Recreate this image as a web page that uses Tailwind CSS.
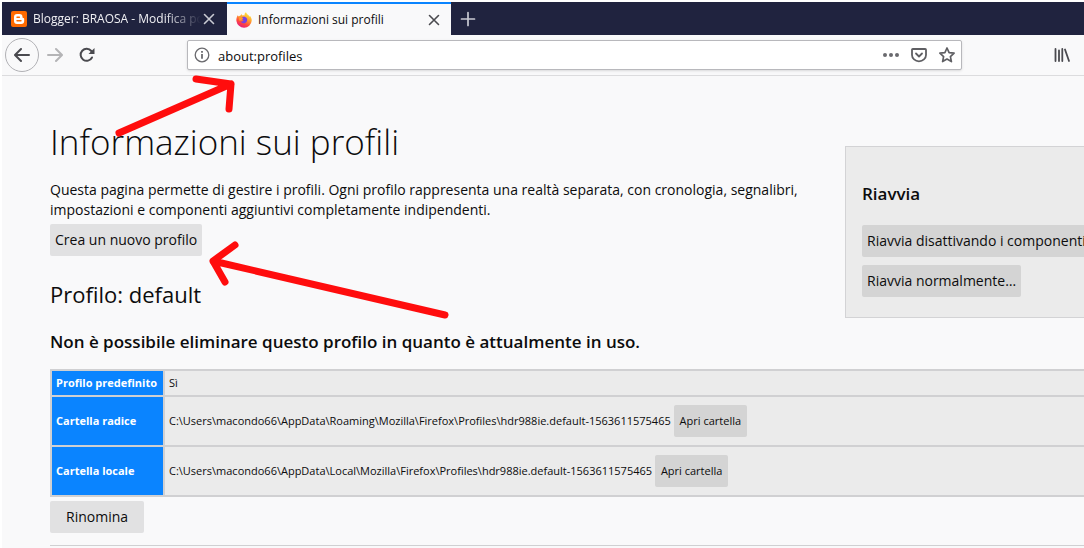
<!DOCTYPE html>
<html lang="it">
<head>
    <meta charset="UTF-8">
    <meta name="viewport" content="width=device-width, initial-scale=1.0">
    <title>Informazioni sui profili</title>
    <script src="https://cdn.jsdelivr.net/npm/@tailwindcss/browser@4"></script>
    <style>
        body {
            font-family: 'Open Sans', 'Noto Sans', sans-serif;
        }
    </style>
</head>
<body class="relative bg-white pt-[2px] pl-[2px] min-h-screen flex flex-col overflow-hidden text-sm text-[#0c0c0d]">

    <!-- Barra delle schede -->
    <nav class="flex h-[33px] bg-[#20233f] text-xs">
        <div class="flex items-center w-[225px] pl-[9px] pr-[10px] text-[#f0f0f4]">
            <svg class="w-4 h-4 shrink-0 mr-[6px]" viewBox="0 0 16 16">
                <rect width="16" height="16" rx="2" fill="#ff6a00"/>
                <path d="M6 3h2.5a3 3 0 0 1 3 3c0 .8.3 1 1 1 .4 0 .7.3.7.7V10a3 3 0 0 1-3 3H6a3 3 0 0 1-3-3V6a3 3 0 0 1 3-3z" fill="#fff"/>
                <path d="M6 6.2h2.4M6 9.8h4" stroke="#ff6a00" stroke-width="1.4" stroke-linecap="round"/>
            </svg>
            <span class="flex-1 overflow-hidden whitespace-nowrap [mask-image:linear-gradient(to_left,transparent,black_36px)]">Blogger: BRAOSA - Modifica post</span>
            <button aria-label="Chiudi scheda" class="shrink-0">
                <svg class="w-4 h-4" viewBox="0 0 16 16" fill="none" stroke="#c9cad3" stroke-width="1.6" stroke-linecap="round"><path d="M3.500 3.500l9 9M12.500 3.500l-9 9"/></svg>
            </button>
        </div>
        <div class="flex items-center w-[224px] pl-[9px] pr-[9px] bg-[#f9f9fa] border-t-2 border-[#0a84ff]">
            <svg class="w-4 h-4 shrink-0 mr-[6px]" viewBox="0 0 16 16">
                <defs>
                    <linearGradient id="fox" x1="0.8" y1="0" x2="0.3" y2="1">
                        <stop offset="0" stop-color="#fff044"/>
                        <stop offset="0.4" stop-color="#ffa42e"/>
                        <stop offset="0.7" stop-color="#ff4a3d"/>
                        <stop offset="1" stop-color="#e5177f"/>
                    </linearGradient>
                </defs>
                <path d="M1.800 3.200l.9 1.300c.5-.5 1-.8 1.700-1L5.800 2l.2 1.600C7 3 8 3.200 8.600 3.400 8.300 2 9 .9 10 .2c.4 1.600 2 2.300 3 3.600l.6 1 .5-.9c1.200 1.700 1.700 3.200 1.600 4.800A7.700 7.700 0 0 1 .4 9C.2 6.800.7 4.700 1.800 3.200z" fill="url(#fox)"/>
                <path d="M5.600 5.600c1.500-1.300 4.300-.9 5.300 1 .8 1.700 0 4-2 4.600-1.800.5-3.600-.4-4-2 1 .5 2.200.3 2.900-.5-1-.2-1.500-.6-1.500-1.200 0-.4.200-.6.700-.6z" fill="#7542e5"/>
                <path d="M3 5.500c1-.8 2-.6 2.800 0l1.600.6-1.600 1.300.2.900-2.700.5z" fill="#ff9a2c"/>
            </svg>
            <span class="flex-1 overflow-hidden whitespace-nowrap">Informazioni sui profili</span>
            <button aria-label="Chiudi scheda" class="shrink-0 ml-1">
                <svg class="w-4 h-4" viewBox="0 0 16 16" fill="none" stroke="#4a4a4f" stroke-width="1.6" stroke-linecap="round"><path d="M3.500 3.500l9 9M12.500 3.500l-9 9"/></svg>
            </button>
        </div>
        <button aria-label="Nuova scheda" class="px-[9px]">
            <svg class="w-4 h-4" viewBox="0 0 16 16" fill="none" stroke="#c9cad3" stroke-width="1.700" stroke-linecap="round"><path d="M8 1.500v13M1.500 8h13"/></svg>
        </button>
    </nav>

    <!-- Barra di navigazione -->
    <div class="flex items-center h-[41px] pl-[3px] pr-[14px] bg-[#f9f9fa] border-b border-[#dcdcde] text-[#4a4a4f]">
        <button aria-label="Indietro" class="grid place-items-center w-[34px] h-[34px] rounded-full border border-[#b1b1b5]">
            <svg class="w-4 h-4" viewBox="0 0 16 16" fill="none" stroke="currentColor" stroke-width="2" stroke-linecap="round" stroke-linejoin="round"><path d="M15 8H1.500M7 2L1 8l6 6"/></svg>
        </button>
        <button aria-label="Avanti" class="ml-2" disabled>
            <svg class="w-4 h-4" viewBox="0 0 16 16" fill="none" stroke="#b4b4b6" stroke-width="2" stroke-linecap="round" stroke-linejoin="round"><path d="M1 8h13.500M9 2l6 6-6 6"/></svg>
        </button>
        <button aria-label="Ricarica" class="ml-4">
            <svg class="w-4 h-4" viewBox="0 0 16 16" fill="none" stroke="currentColor" stroke-width="2" stroke-linecap="round"><path d="M13 10.500A6 6 0 1 1 12.300 4"/><path d="M15.500 1v6h-6z" fill="currentColor" stroke="none"/></svg>
        </button>
        <div class="flex items-center flex-1 h-[30px] ml-[92px] mr-[92px] px-[6px] bg-white border border-[#b8b8bc] rounded-xs shadow-sm">
            <svg class="w-4 h-4 shrink-0" viewBox="0 0 16 16" fill="none" stroke="#6a6a6e" stroke-width="1.300"><circle cx="8" cy="8" r="6.800"/><path d="M8 7v4.800M8 4v1.800" stroke-width="1.800"/></svg>
            <input type="text" aria-label="Indirizzo" value="about:profiles" class="flex-1 min-w-0 ml-2 pt-[2px] text-[13px] text-[#0c0c0d] outline-none">
            <button aria-label="Azioni pagina">
                <svg class="w-4 h-4" viewBox="0 0 16 16" fill="#6a6a6e"><circle cx="2" cy="8" r="2"/><circle cx="8" cy="8" r="2"/><circle cx="14" cy="8" r="2"/></svg>
            </button>
            <button aria-label="Salva in Pocket" class="ml-3">
                <svg class="w-4 h-4" viewBox="0 0 16 16" fill="none" stroke="#5f5f63" stroke-width="1.800" stroke-linecap="round" stroke-linejoin="round"><path d="M1.800 2h12.400a.8.800 0 0 1 .8.800V8A7 6.300 0 0 1 1 8V2.800A.8.800 0 0 1 1.800 2z"/><path d="M5 6.500l3 3 3-3"/></svg>
            </button>
            <button aria-label="Aggiungi ai segnalibri" class="ml-3">
                <svg class="w-4 h-4" viewBox="0 0 16 16" fill="none" stroke="#5f5f63" stroke-width="1.700" stroke-linejoin="round"><path d="M8 1l2.100 4.600 5 .6-3.700 3.400 1 5L8 12.100l-4.400 2.500 1-5L.9 6.200l5-.6z"/></svg>
            </button>
        </div>
        <button aria-label="Libreria">
            <svg class="w-4 h-4" viewBox="0 0 16 16" fill="none" stroke="currentColor" stroke-width="1.800" stroke-linecap="round"><path d="M1.500 2v12M5 3.500V14M8.300 2v12M11 2.500L15 14"/></svg>
        </button>
    </div>

    <!-- Contenuto della pagina -->
    <main class="flex-1 bg-[#f9f9fa] pl-12">
        <div class="flex items-start">
            <div class="flex-1 min-w-0 pt-9 pr-3">
                <h1 class="text-[35px] leading-[60px] font-light">Informazioni sui profili</h1>
                <p class="mt-2 leading-5">Questa pagina permette di gestire i profili. Ogni profilo rappresenta una realtà separata, con cronologia, segnalibri, impostazioni e componenti aggiuntivi completamente indipendenti.</p>
                <button class="mt-1 h-8 px-[5px] bg-[#e1e1e2] rounded-xs">Crea un nuovo profilo</button>
            </div>
            <aside class="shrink-0 w-[239px] h-[172px] mt-[70px] -mb-16 px-4 pt-8 bg-[#ebebeb] border border-r-0 border-[#d3d3d5] whitespace-nowrap overflow-hidden">
                <h3 class="text-[17px] leading-[30px] font-semibold">Riavvia</h3>
                <button class="block mt-4 h-8 px-[5px] bg-[#d4d4d4] rounded-xs">Riavvia disattivando i componenti aggiuntivi…</button>
                <button class="block mt-2 h-8 px-[5px] bg-[#d4d4d4] rounded-xs">Riavvia normalmente…</button>
            </aside>
        </div>

        <h2 class="mt-[22px] text-[22px] leading-8 font-medium">Profilo: default</h2>
        <h3 class="mt-[18px] text-[17px] leading-7 font-semibold">Non è possibile eliminare questo profilo in quanto è attualmente in uso.</h3>

        <table class="mt-[13px] w-full border-collapse border-2 border-r-0 border-[#d0d0d2] bg-[#ebebeb] text-[11px]">
            <tbody>
                <tr class="h-[26px] border-b-2 border-[#d0d0d2]">
                    <th scope="row" class="w-[113px] px-1 text-left text-white bg-[#0a84ff] whitespace-nowrap border-r-2 border-[#d0d0d2]">Profilo predefinito</th>
                    <td class="px-1">Sì</td>
                </tr>
                <tr class="h-[50px] border-b-2 border-[#d0d0d2]">
                    <th scope="row" class="px-1 text-left text-white bg-[#0a84ff] border-r-2 border-[#d0d0d2]">Cartella radice</th>
                    <td class="px-1">C:\Users\macondo66\AppData\Roaming\Mozilla\Firefox\Profiles\hdr988ie.default-1563611575465 <button class="h-8 px-[6px] bg-[#d4d4d4] rounded-xs">Apri cartella</button></td>
                </tr>
                <tr class="h-[50px]">
                    <th scope="row" class="px-1 text-left text-white bg-[#0a84ff] border-r-2 border-[#d0d0d2]">Cartella locale</th>
                    <td class="px-1">C:\Users\macondo66\AppData\Local\Mozilla\Firefox\Profiles\hdr988ie.default-1563611575465 <button class="h-8 px-[6px] bg-[#d4d4d4] rounded-xs">Apri cartella</button></td>
                </tr>
            </tbody>
        </table>
        <button class="block mt-1 h-8 px-4 bg-[#e1e1e2] rounded-xs">Rinomina</button>
        <hr class="mt-3 border-[#d0d0d2]">
    </main>

    <!-- Frecce rosse sopra la pagina -->
    <svg class="absolute left-0 top-0 pointer-events-none" width="460" height="330" fill="none" stroke="#ff0d0d" stroke-width="7" stroke-linecap="round" stroke-linejoin="round">
        <path d="M119 133L231 84M196 79L231 84L229 109"/>
        <path d="M445 315L213 261M235 245L213 261L225 282"/>
    </svg>

</body>
</html>
